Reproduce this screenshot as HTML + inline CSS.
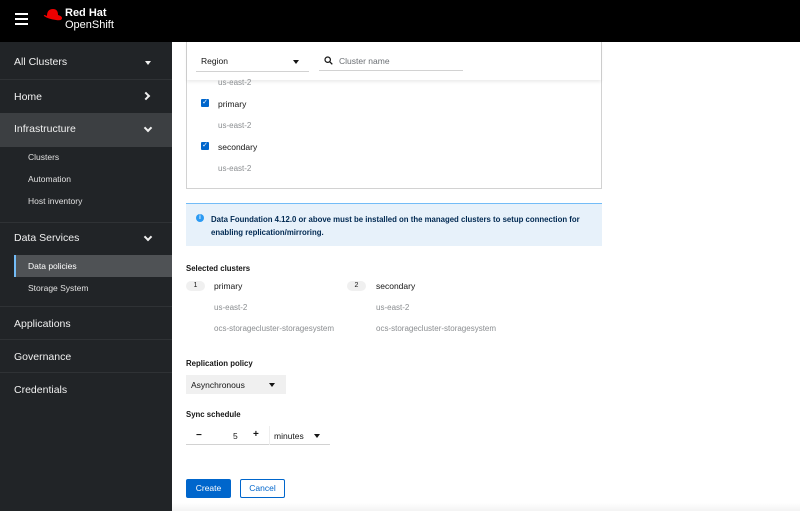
<!DOCTYPE html>
<html><head><style>
*{box-sizing:border-box;margin:0;padding:0}
body{width:800px;height:511px;overflow:hidden;font-family:"Liberation Sans",sans-serif;background:#fff;position:relative;color:#151515}
.hdr{position:absolute;left:0;top:0;width:800px;height:42px;background:#000}
.side{position:absolute;left:0;top:42px;width:172px;height:469px;background:#212427;color:#e0e0e0}
.a{position:absolute;font-size:10px}
.nav{position:absolute;left:0;width:172px;font-size:10.5px;color:#f0f0f0;padding-left:14px}
.sub{position:absolute;left:28px;font-size:8.5px;color:#e0e0e0}
.sep{position:absolute;left:0;width:172px;height:1px;background:#2f3235}
.g{color:#8a8d90;font-size:8px;position:absolute}
.cb{position:absolute;width:8px;height:8px;background:#0066cc;border-radius:1px;color:#fff;font-size:7px;line-height:8px;text-align:center}
.tri{position:absolute;width:0;height:0;border-left:3.5px solid transparent;border-right:3.5px solid transparent;border-top:4px solid #151515}
.chev{position:absolute;width:6px;height:6px;border-right:2px solid #f0f0f0;border-bottom:2px solid #f0f0f0}
</style></head><body>
<div class="hdr">
 <div style="position:absolute;left:15px;top:13px;width:13px;height:2px;background:#fff;box-shadow:0 5px 0 #fff,0 10px 0 #fff"></div>
 <svg style="position:absolute;left:42px;top:7px" width="22" height="16" viewBox="0 0 22 16"><path d="M5 9 Q5 2 11 2 Q16 2 16 8 Q20 9 20 11 Q20 14 14 13 Q6 12 2 9 Q1 7 5 9Z" fill="#e00"/></svg>
 <div class="a" style="left:65px;top:7px;color:#fff;font-weight:bold;font-size:11px">Red Hat</div>
 <div class="a" style="left:65px;top:19px;color:#fff;font-size:11px">OpenShift</div>
</div>
<div class="side">
 <div class="nav" style="top:0;height:38px;line-height:41px">All Clusters</div>
 <div class="tri" style="left:145px;top:19px;border-top-color:#f0f0f0"></div>
 <div class="sep" style="top:37px"></div>
 <div class="nav" style="top:37px;height:34px;line-height:36px">Home</div>
 <div class="chev" style="left:143px;top:51px;transform:rotate(-45deg)"></div>
 <div class="sep" style="top:71px"></div>
 <div class="nav" style="top:71px;height:34px;line-height:33px;background:#3c3f42">Infrastructure</div>
 <div class="chev" style="left:145px;top:83px;transform:rotate(45deg)"></div>
 <div class="sub" style="top:110px">Clusters</div>
 <div class="sub" style="top:132px">Automation</div>
 <div class="sub" style="top:154px">Host inventory</div>
 <div class="sep" style="top:180px"></div>
 <div class="nav" style="top:180px;height:34px;line-height:33px">Data Services</div>
 <div class="chev" style="left:145px;top:192px;transform:rotate(45deg)"></div>
 <div style="position:absolute;left:14px;top:213px;width:158px;height:22px;background:#4f5255;border-left:2px solid #73bcf7"></div>
 <div class="sub" style="top:219px;color:#fff">Data policies</div>
 <div class="sub" style="top:241px">Storage System</div>
 <div class="sep" style="top:264px"></div>
 <div class="nav" style="top:264px;height:33px;line-height:37px">Applications</div>
 <div class="sep" style="top:297px"></div>
 <div class="nav" style="top:297px;height:33px;line-height:37px">Governance</div>
 <div class="sep" style="top:330px"></div>
 <div class="nav" style="top:330px;height:33px;line-height:37px">Credentials</div>
</div>
<div style="position:absolute;left:186px;top:42px;width:416px;height:147px;border:1px solid #d2d2d2;border-top:none"></div>
<div style="position:absolute;left:187px;top:42px;width:414px;height:38px;background:#fff;box-shadow:0 2px 3px rgba(0,0,0,.08)"></div>
<div class="a" style="left:201px;top:56px;font-size:8.5px">Region</div>
<div class="tri" style="left:293px;top:60px"></div>
<div style="position:absolute;left:196px;top:71px;width:113px;height:1px;background:#d2d2d2"></div>
<svg style="position:absolute;left:324px;top:56px" width="9" height="9" viewBox="0 0 9 9"><circle cx="3.7" cy="3.7" r="2.7" fill="none" stroke="#151515" stroke-width="1.2"/><path d="M5.7 5.7L8.3 8.3" stroke="#151515" stroke-width="1.3"/></svg>
<div class="a" style="left:339px;top:56px;font-size:8.5px;color:#6a6e73">Cluster name</div>
<div style="position:absolute;left:319px;top:70px;width:144px;height:1px;background:#d2d2d2"></div>
<div class="g" style="left:218px;top:78px">us-east-2</div>
<div class="cb" style="left:201px;top:99px">✓</div>
<div class="a" style="left:218px;top:99px;font-size:8.5px">primary</div>
<div class="g" style="left:218px;top:121px">us-east-2</div>
<div class="cb" style="left:201px;top:142px">✓</div>
<div class="a" style="left:218px;top:142px;font-size:8.5px">secondary</div>
<div class="g" style="left:218px;top:164px">us-east-2</div>
<div style="position:absolute;left:186px;top:203px;width:416px;height:43px;background:#e7f1fa;border-top:1px solid #73bcf7"></div>
<div style="position:absolute;left:196px;top:214px;width:8px;height:8px;border-radius:50%;background:#2b9af3;color:#fff;font-size:6px;text-align:center;line-height:8px;font-weight:bold">i</div>
<div class="a" style="left:211px;top:213px;font-size:7.8px;line-height:13px;color:#002952;font-weight:bold">Data Foundation 4.12.0 or above must be installed on the managed clusters to setup connection for<br>enabling replication/mirroring.</div>
<div class="a" style="left:186px;top:264px;font-size:7.8px;font-weight:bold">Selected clusters</div>
<div style="position:absolute;left:186px;top:281px;width:19px;height:10px;border-radius:5px;background:#f0f0f0;font-size:7px;text-align:center;line-height:10px">1</div>
<div class="a" style="left:214px;top:281px;font-size:8.5px">primary</div>
<div class="g" style="left:214px;top:303px">us-east-2</div>
<div class="g" style="left:214px;top:324px">ocs-storagecluster-storagesystem</div>
<div style="position:absolute;left:347px;top:281px;width:19px;height:10px;border-radius:5px;background:#f0f0f0;font-size:7px;text-align:center;line-height:10px">2</div>
<div class="a" style="left:376px;top:281px;font-size:8.5px">secondary</div>
<div class="g" style="left:376px;top:303px">us-east-2</div>
<div class="g" style="left:376px;top:324px">ocs-storagecluster-storagesystem</div>
<div class="a" style="left:186px;top:359px;font-size:7.8px;font-weight:bold">Replication policy</div>
<div style="position:absolute;left:186px;top:375px;width:100px;height:19px;background:#f0f0f0"></div>
<div class="a" style="left:191px;top:380px;font-size:8.5px">Asynchronous</div>
<div class="tri" style="left:269px;top:383px"></div>
<div class="a" style="left:186px;top:410px;font-size:7.8px;font-weight:bold">Sync schedule</div>
<div style="position:absolute;left:186px;top:444px;width:144px;height:1px;background:#d2d2d2"></div>
<div style="position:absolute;left:269px;top:426px;width:1px;height:19px;background:#eee"></div>
<div class="a" style="left:196px;top:430px;font-size:10px;font-weight:bold">−</div>
<div class="a" style="left:233px;top:431px;font-size:8.5px">5</div>
<div class="a" style="left:253px;top:429px;font-size:10px;font-weight:bold">+</div>
<div class="a" style="left:274px;top:431px;font-size:8.5px">minutes</div>
<div class="tri" style="left:314px;top:434px"></div>
<div style="position:absolute;left:186px;top:479px;width:45px;height:19px;background:#0066cc;border-radius:2px;color:#fff;font-size:8.5px;text-align:center;line-height:19px">Create</div>
<div style="position:absolute;left:240px;top:479px;width:45px;height:19px;border:1px solid #0066cc;border-radius:2px;color:#0066cc;font-size:8.5px;text-align:center;line-height:17px">Cancel</div>
<div style="position:absolute;left:172px;top:503px;width:628px;height:8px;background:linear-gradient(#fff,#f3f3f3)"></div>
</body></html>
